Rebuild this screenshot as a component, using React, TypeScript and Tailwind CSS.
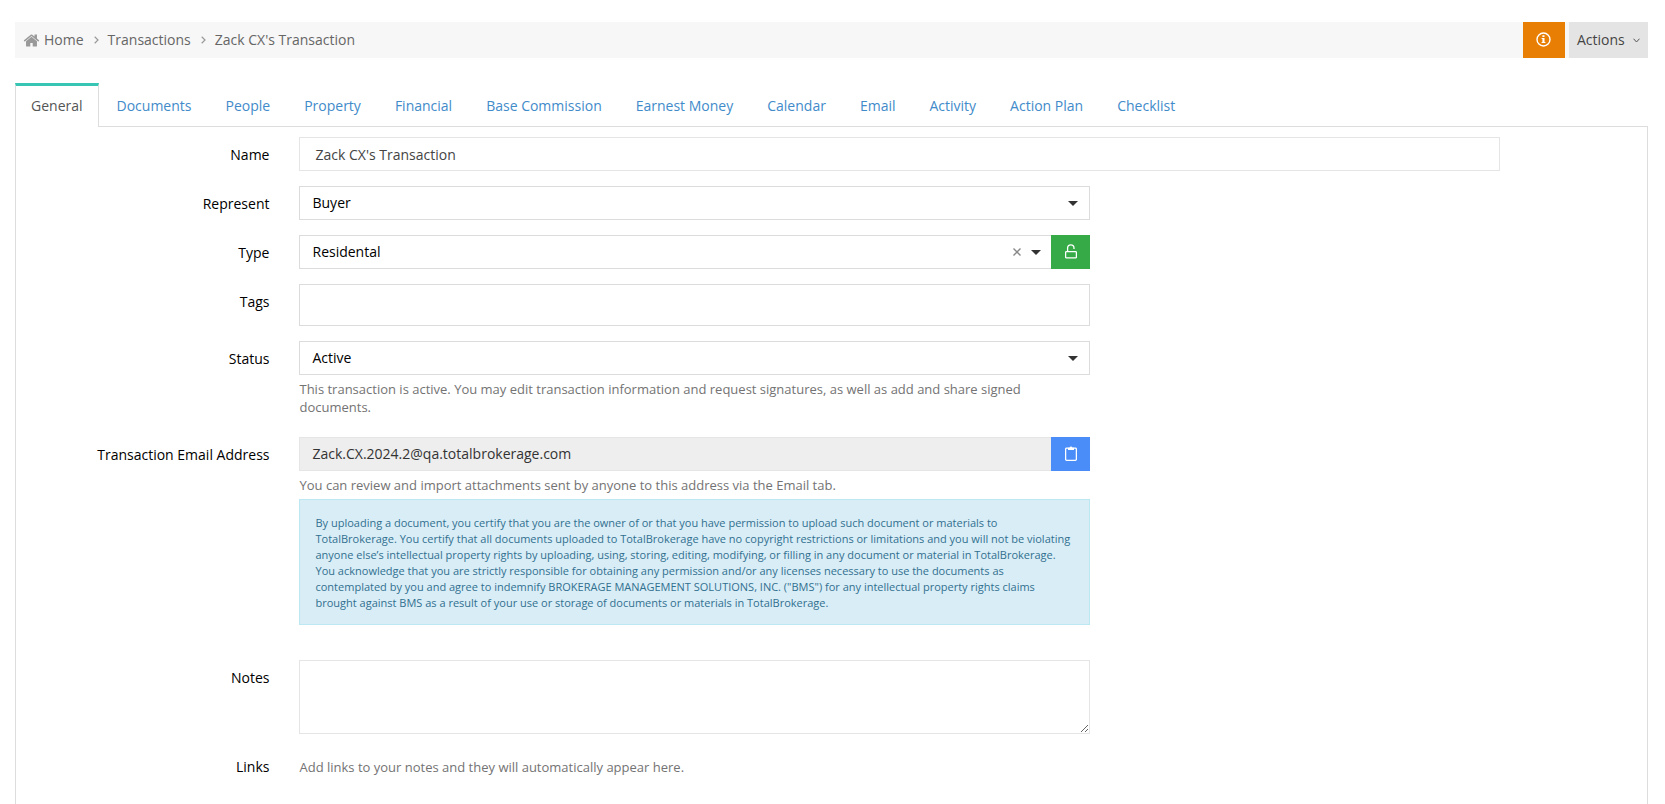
import React from "react";

const TABS = [
  "General",
  "Documents",
  "People",
  "Property",
  "Financial",
  "Base Commission",
  "Earnest Money",
  "Calendar",
  "Email",
  "Activity",
  "Action Plan",
  "Checklist",
];

function HomeIcon() {
  return (
    <svg aria-hidden="true" viewBox="0 0 1792 1792" className="h-[17px] w-[17px] fill-[#999999]">
      <path d="M1472 992v480q0 26-19 45t-45 19h-384v-384h-256v384h-384q-26 0-45-19t-19-45v-480q0-1 .5-3t.5-3l575-474 575 474q1 2 1 6zm223-69l-62 74q-8 9-21 11h-3q-13 0-21-7l-692-577-692 577q-12 8-24 7-13-2-21-11l-62-74q-8-10-7-23.5t11-21.5l719-599q32-26 76-26t76 26l244 204v-195q0-14 9-23t23-9h192q14 0 23 9t9 23v408l219 182q10 8 11 21.5t-7 23.5z" />
    </svg>
  );
}

function Separator() {
  return (
    <svg aria-hidden="true" viewBox="0 0 5 8" className="mr-[9px] ml-2.5 h-2 w-[5px] fill-none stroke-[#999999] stroke-[1.2]">
      <path d="M.7.8 4 4 .7 7.2" />
    </svg>
  );
}

function Caret() {
  return (
    <svg aria-hidden="true" viewBox="0 0 10 5" className="h-[5px] w-2.5 fill-[#333333]">
      <path d="M0 0h10L5 5z" />
    </svg>
  );
}

function InfoIcon() {
  return (
    <svg aria-hidden="true" viewBox="0 0 15 15" className="h-[15px] w-[15px] fill-white">
      <circle cx="7.5" cy="7.5" r="6.5" fill="none" stroke="white" strokeWidth="1.4" />
      <path d="M6.4 3.3h2.1v1.7H6.4zM5.6 5.9h2.9v4h.9v1.2H5.6V9.9h.8V7.1h-.8z" />
    </svg>
  );
}

function UnlockIcon() {
  return (
    <svg aria-hidden="true" viewBox="0 0 12 15" className="h-[15px] w-3 fill-none stroke-white stroke-[1.3]">
      <rect x=".6" y="7.6" width="10.8" height="6.3" rx=".8" />
      <path d="M2.6 7.5V4a3.2 3.2 0 0 1 6.4 0v1" />
    </svg>
  );
}

function ClipboardIcon() {
  return (
    <svg aria-hidden="true" viewBox="0 0 12 15" className="h-[15px] w-3 fill-none stroke-white stroke-[1.3]">
      <rect x=".6" y="2.2" width="10.8" height="12.1" rx="1" />
      <path d="M3 4V1.8h1.7a1.3 1.3 0 0 1 2.6 0H9V4z" fill="white" stroke="none" />
    </svg>
  );
}

type RowProps = {
  label: string;
  htmlFor?: string;
  wide?: boolean;
  children: React.ReactNode;
};

function Row({ label, htmlFor, wide, children }: RowProps) {
  const labelClass = "block pt-2 text-right leading-5 text-black";
  return (
    <div className="flex">
      <div className="w-1/6 px-[15px]">
        {htmlFor ? (
          <label htmlFor={htmlFor} className={labelClass}>
            {label}
          </label>
        ) : (
          <span className={labelClass}>{label}</span>
        )}
      </div>
      <div className={wide ? "w-3/4 px-[15px]" : "w-1/2 px-[15px]"}>{children}</div>
    </div>
  );
}

function Select({ id, value, clearable }: { id: string; value: string; clearable?: boolean }) {
  return (
    <div className="relative flex-1">
      <select
        id={id}
        className={
          "block h-[34px] w-full appearance-none border border-[#dcdcdc] bg-white pb-px pl-3 text-black outline-none " +
          (clearable ? "border-r-0" : "")
        }
      >
        <option>{value}</option>
      </select>
      {clearable && (
        <button type="button" aria-label="Clear type" className="absolute inset-y-0 right-[30px] flex items-center">
          <svg aria-hidden="true" viewBox="0 0 8 8" className="h-2 w-2 fill-none stroke-[#888888] stroke-[1.4]">
            <path d="m.5.5 7 7m0-7-7 7" />
          </svg>
        </button>
      )}
      <span
        className={
          "pointer-events-none absolute inset-y-0 flex items-center " + (clearable ? "right-2.5" : "right-3")
        }
      >
        <Caret />
      </span>
    </div>
  );
}

export default function App() {
  return (
    <div className="h-screen overflow-hidden bg-white font-['Open_Sans',sans-serif] text-sm text-[#333333]">
      <div className="flex h-full flex-col pt-[22px] pr-[17px] pl-[15px]">
        <header className="flex h-9 shrink-0 bg-[#f7f7f7]">
          <nav aria-label="Breadcrumb" className="flex flex-1 items-center pl-2 text-[#666666]">
            <HomeIcon />
            <a href="#home" className="ml-1">
              Home
            </a>
            <Separator />
            <a href="#transactions">Transactions</a>
            <Separator />
            <span>Zack CX's Transaction</span>
          </nav>
          <div className="flex gap-1">
            <button
              type="button"
              aria-label="Information"
              className="flex w-[42px] items-center justify-center bg-[#e87e04] pr-px pb-px"
            >
              <InfoIcon />
            </button>
            <button
              type="button"
              className="flex w-[79px] items-center justify-between bg-[#e4e4e4] pr-2 pl-2 text-[#444444]"
            >
              Actions
              <svg aria-hidden="true" viewBox="0 0 7 5" className="h-[5px] w-[7px] fill-none stroke-[#555555]">
                <path d="M.5.7 3.5 4 6.5.7" />
              </svg>
            </button>
          </div>
        </header>

        <nav aria-label="Transaction sections" className="mt-[25px] flex shrink-0 gap-0.5">
          {TABS.map((tab, i) =>
            i === 0 ? (
              <a
                key={tab}
                href="#general"
                aria-current="page"
                className="relative z-10 -mb-px h-11 border-x border-t-[3px] border-x-[#dddddd] border-t-[#36c6b3] bg-white px-[15px] pt-2.5 leading-5 text-[#555555]"
              >
                {tab}
              </a>
            ) : (
              <a key={tab} href="#tab" className="px-4 pt-[13px] leading-5 text-[#428bca]">
                {tab}
              </a>
            ),
          )}
        </nav>

        <main className="flex-1 border border-b-0 border-[#dddddd] px-2.5 pt-2.5">
          <form className="-mx-[15px] flex flex-col gap-[15px]">
            <Row label="Name" htmlFor="name" wide>
              <input
                id="name"
                defaultValue="Zack CX's Transaction"
                className="block h-[34px] w-full border border-[#e5e5e5] px-[15px] text-[#444444] outline-none"
              />
            </Row>
            <Row label="Represent" htmlFor="represent">
              <Select id="represent" value="Buyer" />
            </Row>
            <Row label="Type" htmlFor="type">
              <div className="flex">
                <Select id="type" value="Residental" clearable />
                <button
                  type="button"
                  aria-label="Unlock type"
                  className="flex w-[39px] items-center justify-center bg-[#35aa47] pb-px pl-px"
                >
                  <UnlockIcon />
                </button>
              </div>
            </Row>
            <Row label="Tags" htmlFor="tags">
              <input id="tags" className="block h-[42px] w-full border border-[#dcdcdc] px-3 outline-none" />
            </Row>
            <Row label="Status" htmlFor="status">
              <Select id="status" value="Active" />
              <p className="mt-[5px] mb-1.5 text-[13px] leading-[18px] text-[#737373]">
                This transaction is active. You may edit transaction information and request signatures, as well as add
                and share signed documents.
              </p>
            </Row>
            <Row label="Transaction Email Address" htmlFor="email">
              <div className="flex">
                <input
                  id="email"
                  readOnly
                  value="Zack.CX.2024.2@qa.totalbrokerage.com"
                  className="block h-[34px] min-w-0 flex-1 border border-r-0 border-[#e5e5e5] bg-[#eeeeee] px-3 pb-0.5 text-[#333333] outline-none"
                />
                <button
                  type="button"
                  aria-label="Copy address"
                  className="flex w-[39px] items-center justify-center bg-[#4b8df8] pb-px pl-px"
                >
                  <ClipboardIcon />
                </button>
              </div>
              <p className="my-[5px] text-[13px] leading-[18px] text-[#737373]">
                You can review and import attachments sent by anyone to this address via the Email tab.
              </p>
              <p className="mb-5 border border-[#bce8f1] bg-[#d9edf7] px-[15px] pt-[15px] pb-[13px] text-[11px] leading-4 text-[#31708f]">
                By uploading a document, you certify that you are the owner of or that you have permission to upload
                such document or materials to TotalBrokerage. You certify that all documents uploaded to TotalBrokerage
                have no copyright restrictions or limitations and you will not be violating anyone else’s intellectual
                property rights by uploading, using, storing, editing, modifying, or filling in any document or material
                in TotalBrokerage. You acknowledge that you are strictly responsible for obtaining any permission and/or
                any licenses necessary to use the documents as contemplated by you and agree to indemnify BROKERAGE
                MANAGEMENT SOLUTIONS, INC. ("BMS") for any intellectual property rights claims brought against BMS as a
                result of your use or storage of documents or materials in TotalBrokerage.
              </p>
            </Row>
            <Row label="Notes" htmlFor="notes">
              <textarea
                id="notes"
                className="block h-[74px] w-full resize border border-[#e5e5e5] px-3 py-1.5 outline-none"
              />
            </Row>
            <Row label="Links">
              <p className="pt-2 text-[13px] leading-5 text-[#737373]">
                Add links to your notes and they will automatically appear here.
              </p>
            </Row>
          </form>
        </main>
      </div>
    </div>
  );
}
